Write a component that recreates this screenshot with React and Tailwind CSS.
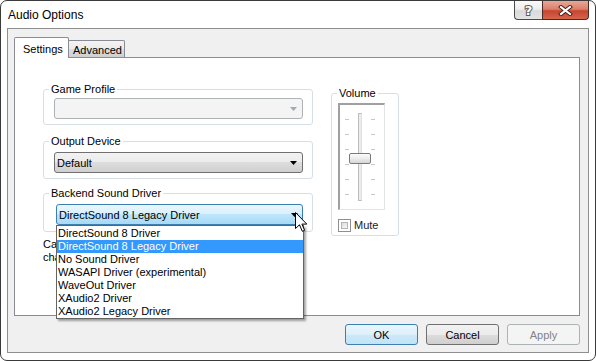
import React from "react";

function ComboArrow({ color = "#000" }) {
  return (
    <svg width="7" height="4" viewBox="0 0 7 4" className="block">
      <path d="M0 0H7L3.5 4Z" fill={color} />
    </svg>
  );
}

function Group({ label, className, children }) {
  return (
    <div className={className}>
      <span className="absolute top-[-8px] left-[5px] px-[2px] bg-white leading-[14px] whitespace-nowrap">
        {label}
      </span>
      {children}
    </div>
  );
}

const items = [
  "DirectSound 8 Driver",
  "DirectSound 8 Legacy Driver",
  "No Sound Driver",
  "WASAPI Driver (experimental)",
  "WaveOut Driver",
  "XAudio2 Driver",
  "XAudio2 Legacy Driver",
];

export default function App() {
  return (
    <div className="w-[596px] h-[361px] bg-white font-['Liberation_Sans',Arial,sans-serif] text-[11px] text-black leading-none select-none">
      <div className="w-full h-full flex flex-col border border-[#3a3a3a] rounded-[7px] bg-white">
        {/* Title bar */}
        <div className="h-[27px] flex items-start justify-between pl-[7px] pr-[6px]">
          <div className="pt-[7px] leading-[14px] text-[12px]">Audio Options</div>
          <div className="flex">
            <div className="w-[28px] h-[19px] flex items-center justify-center border border-t-0 border-r-0 border-[#4a4a4a] rounded-bl-[4px] bg-[linear-gradient(#fafafa_0%,#eeeeee_45%,#d9d9d9_55%,#e4e4e4_100%)]">
              <span className="font-['DejaVu_Sans',sans-serif] font-bold text-[13px] leading-none text-white [-webkit-text-stroke:2px_#5a5a5a] [paint-order:stroke_fill]">
                ?
              </span>
            </div>
            <div className="w-[47px] h-[19px] flex items-center justify-center border border-t-0 border-[#4a2a22] rounded-br-[4px] bg-[linear-gradient(#e9a797_0%,#dc806c_45%,#c8452f_55%,#d4654d_100%)]">
              <svg width="15" height="11" viewBox="0 0 15 11">
                <path d="M3 2L12 9M12 2L3 9" stroke="#3d1a12" strokeWidth="4" strokeLinecap="square" />
                <path d="M3 2L12 9M12 2L3 9" stroke="#ffffff" strokeWidth="2.2" strokeLinecap="square" />
              </svg>
            </div>
          </div>
        </div>

        {/* Client area */}
        <div className="flex-1 mx-[6px] mb-[7px] border border-[#8e8f8f] bg-[#f0f0f0] flex flex-col">
          {/* Tabs */}
          <div className="relative z-10 flex items-end pl-[6px] pt-[8px]">
            <div className="h-[21px] w-[55px] -mb-px pl-[8px] pt-[4px] leading-[14px] bg-white border border-b-0 border-[#898c95] rounded-tl-[2px] rounded-tr-[2px]">
              Settings
            </div>
            <div className="h-[17px] w-[56px] pl-[4px] pt-[2px] leading-[14px] border border-l-0 border-b-0 border-[#898c95] rounded-tr-[2px] bg-[linear-gradient(#f3f3f3_0%,#ebebeb_50%,#dddddd_50%,#cfcfcf_100%)]">
              Advanced
            </div>
          </div>

          {/* Panel */}
          <div className="relative ml-[6px] mr-[8px] h-[259px] border border-[#898c95] bg-white flex items-start pl-[28px] pt-[31px] gap-[18px]">
            {/* Left column */}
            <div className="w-[270px] flex flex-col">
              <Group
                label="Game Profile"
                className="relative border border-[#d5dfe5] rounded-[3px] pt-[8px] pb-[5px] pl-[10px] pr-[9px]"
              >
                <div className="h-[21px] flex items-center justify-end pr-[5px] border border-[#adb2b5] rounded-[3px] bg-[#f4f4f4]">
                  <ComboArrow color="#a8a8a8" />
                </div>
              </Group>

              <Group
                label="Output Device"
                className="relative mt-[16px] border border-[#d5dfe5] rounded-[3px] pt-[10px] pb-[5px] pl-[10px] pr-[9px]"
              >
                <div className="h-[21px] flex items-center justify-between pl-[2px] pr-[5px] border border-[#707070] rounded-[3px] bg-[linear-gradient(#f2f2f2_0%,#ebebeb_50%,#dddddd_50%,#cfcfcf_100%)]">
                  <span className="leading-[14px]">Default</span>
                  <ComboArrow />
                </div>
              </Group>

              <Group
                label="Backend Sound Driver"
                className="relative z-20 mt-[14px] border border-[#d5dfe5] rounded-[3px] pt-[10px] pb-[6px] pl-[12px] pr-[9px]"
              >
                <div className="relative h-[21px] flex items-center justify-between pl-[2px] pr-[4px] border border-[#3c7fb1] rounded-[3px] bg-[linear-gradient(#eaf6fd_0%,#d9f0fc_50%,#bee6fd_50%,#a7d9f5_100%)]">
                  <span className="leading-[14px]">DirectSound 8 Legacy Driver</span>
                  <ComboArrow />
                  {/* dropdown list */}
                  <div className="absolute left-[-1px] top-[20px] w-[248px] pt-px border border-[#646464] bg-white shadow-[2px_2px_2px_rgba(0,0,0,0.35)] flex flex-col">
                    {items.map((t, i) => (
                      <div
                        key={t}
                        className={
                          i === 1
                            ? "h-[13px] pl-[1px] leading-[13px] whitespace-nowrap bg-[#3399ff] text-white"
                            : "h-[13px] pl-[1px] leading-[13px] whitespace-nowrap"
                        }
                      >
                        {t}
                      </div>
                    ))}
                  </div>
                  {/* mouse cursor */}
                  <svg
                    width="13"
                    height="21"
                    viewBox="0 0 13 21"
                    className="absolute left-[238px] top-[7px]"
                  >
                    <path
                      d="M0.5 0.5V16.5L4.5 12.8L7.3 19.3L9.6 18.3L6.9 12.1H11.8Z"
                      fill="#ffffff"
                      stroke="#000000"
                      strokeWidth="1"
                      strokeLinejoin="miter"
                    />
                  </svg>
                </div>
              </Group>

              <div className="mt-[6px] leading-[13px] text-black">
                <div>Caution: the backend driver</div>
                <div>changes take effect on restart.</div>
              </div>
            </div>

            {/* Volume */}
            <Group
              label="Volume"
              className="relative mt-[4px] w-[68px] h-[143px] border border-[#d5dfe5] rounded-[3px] pl-[6px] pt-[9px]"
            >
              <div className="w-[47px] h-[107px] border-t-2 border-l-2 border-r border-b border-t-[#a0a0a0] border-l-[#a0a0a0] border-r-[#e3e3e3] border-b-[#e3e3e3] bg-white flex pl-[5px]">
                <div className="w-[4px] pt-[14px] flex flex-col gap-[14px]">
                  <div className="h-px bg-[#c8c8c8]" />
                  <div className="h-px bg-[#c8c8c8]" />
                  <div className="h-px bg-[#c8c8c8]" />
                  <div className="h-px bg-[#c8c8c8]" />
                  <div className="h-px bg-[#c8c8c8]" />
                  <div className="h-px bg-[#c8c8c8]" />
                </div>
                <div className="relative w-[22px] pt-[8px] flex justify-center">
                  <div className="w-[4px] h-[88px] border border-[#bcbcbc] border-r-[#e0e0e0] bg-[#ececec]" />
                  <div className="absolute left-0 top-[48px] w-[22px] h-[11px] rounded-[2px] border border-[#7a7a7a] bg-[linear-gradient(#fbfbfb_0%,#ececec_50%,#d6d6d6_100%)]" />
                </div>
                <div className="w-[4px] pt-[14px] flex flex-col gap-[14px]">
                  <div className="h-px bg-[#c8c8c8]" />
                  <div className="h-px bg-[#c8c8c8]" />
                  <div className="h-px bg-[#c8c8c8]" />
                  <div className="h-px bg-[#c8c8c8]" />
                  <div className="h-px bg-[#c8c8c8]" />
                  <div className="h-px bg-[#c8c8c8]" />
                </div>
              </div>
              <div className="mt-[8px] flex items-center gap-[3px]">
                <div className="w-[13px] h-[13px] border border-[#8f8f8f] bg-white p-[2px]">
                  <div className="w-full h-full border border-[#b5b5b5] bg-[linear-gradient(135deg,#dcdcdc,#f8f8f8)]" />
                </div>
                <span className="leading-[14px] text-[#1a1a2e]">Mute</span>
              </div>
            </Group>
          </div>

          {/* Buttons */}
          <div className="mt-[8px] flex justify-end gap-[8px] pr-[8px]">
            <div className="w-[73px] h-[21px] flex items-center justify-center rounded-[3px] border border-[#3c7fb1] bg-[linear-gradient(#eaf6fd_0%,#dcf0fb_50%,#cde9f9_50%,#c2e3f7_100%)] leading-[14px]">
              OK
            </div>
            <div className="w-[73px] h-[21px] flex items-center justify-center rounded-[3px] border border-[#707070] bg-[linear-gradient(#f2f2f2_0%,#ebebeb_50%,#dddddd_50%,#cfcfcf_100%)] leading-[14px]">
              Cancel
            </div>
            <div className="w-[73px] h-[21px] flex items-center justify-center rounded-[3px] border border-[#adb2b5] bg-[#f4f4f4] text-[#838383] leading-[14px]">
              Apply
            </div>
          </div>
        </div>
      </div>
    </div>
  );
}
